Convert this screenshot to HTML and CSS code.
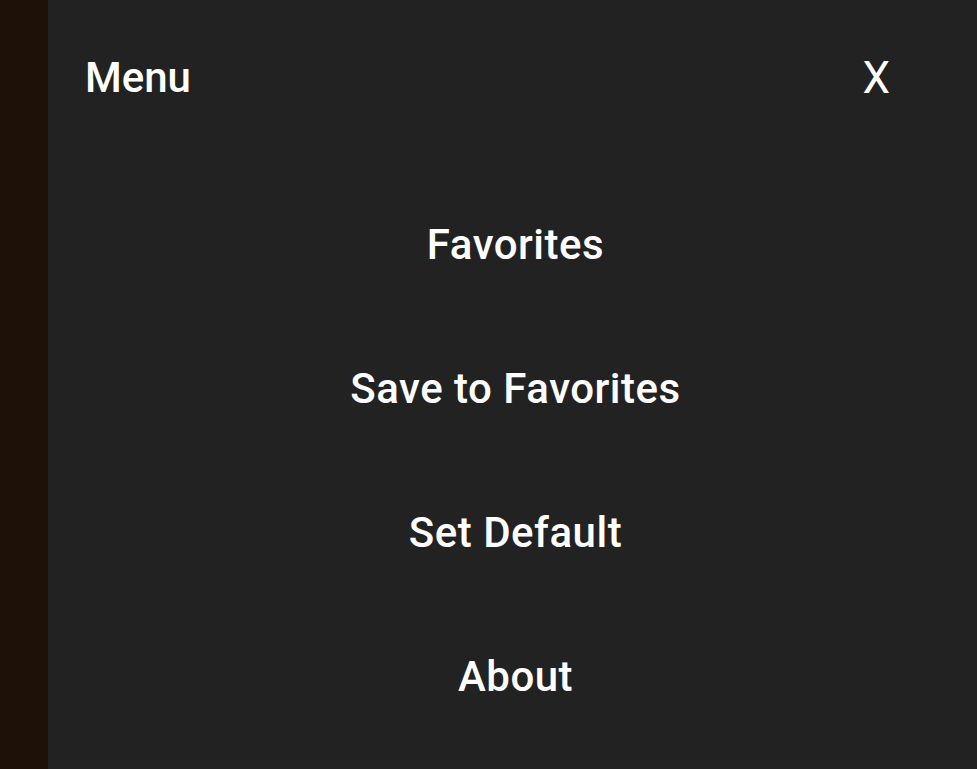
FILE: index.html
```html
<!DOCTYPE html>
<html lang="en">

<head>
    <meta charset="UTF-8">
    <meta name="viewport" content="width=device-width, initial-scale=1.0">
    <title>Menu</title>
    <link rel="stylesheet" href="styles.css">
</head>

<body>
    <div class="backdrop"></div>

    <!-- Side Menu -->
    <div class="menu-panel">
        <div class="menu-header">
            <span class="menu-title">Menu</span>
            <a href="javascript:void(0);" class="close-btn">X</a>
        </div>
        <ul class="menu-list">
            <li><a href="#">Favorites</a></li>
            <li><a href="#">Save to Favorites</a></li>
            <li><a href="#">Set Default</a></li>
            <li><a href="#">About</a></li>
        </ul>
    </div>
</body>

</html>
```

FILE: styles.css
```css
/* Global Styles */
body {
    font-family: Roboto, "Liberation Sans", sans-serif;
    background-color: #1e1108;
    margin: 0;
    padding: 0;
    display: flex;
    height: 100vh;
    overflow: hidden;
    color: white;
}

.backdrop {
    width: 48px;
    flex-shrink: 0;
}

.menu-panel {
    flex: 1;
    background-color: #222222;
    padding: 54px 87px 0 37px;
}

.menu-header {
    display: flex;
    justify-content: space-between;
    align-items: center;
}

.menu-title,
.close-btn {
    font-size: 42px;
    line-height: 48px;
    font-weight: 500;
}

.close-btn {
    color: white;
    text-decoration: none;
    font-size: 44px;
    font-weight: 400;
}

.menu-list {
    list-style: none;
    margin: 119px 0 0 0;
    padding: 0 0 0 56px;
    display: flex;
    flex-direction: column;
    gap: 96px;
    text-align: center;
}

.menu-list a {
    color: white;
    text-decoration: none;
    font-size: 42px;
    line-height: 48px;
    font-weight: 500;
    letter-spacing: 0.5px;
}
```
